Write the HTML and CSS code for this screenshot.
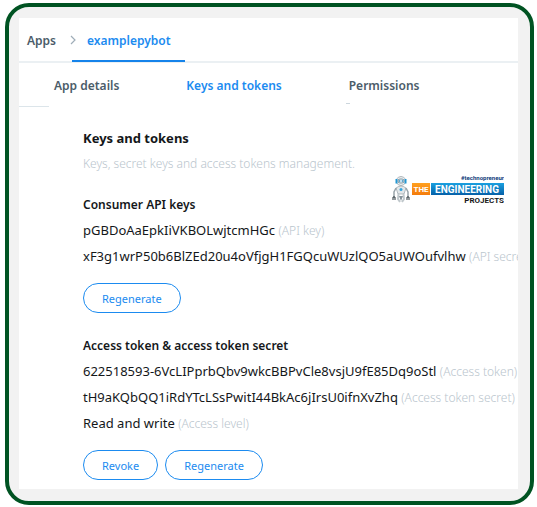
FILE: index.html
```html
<!DOCTYPE html>
<html lang="en">
    <head>
        <meta charset="utf-8">
        <title>examplepybot - Keys and tokens</title>
        <link rel="stylesheet" href="styles.css">
    </head>
    <body>
        <div class="frame">
            <div class="page">
                <nav class="crumbs">
                    <a class="crumb" href="#">Apps</a>
                    <a class="crumb current" href="#">
                        <svg class="arrow" viewBox="0 0 6 10" width="6" height="10"><path d="M1 1l4 4-4 4" fill="none" stroke="#9fadb8" stroke-width="1.2"/></svg>
                        <span>examplepybot</span>
                    </a>
                </nav>

                <nav class="tabs">
                    <a class="tab" href="#">App details</a>
                    <a class="tab active" href="#">Keys and tokens</a>
                    <a class="tab marked" href="#">Permissions</a>
                </nav>

                <main class="content">
                    <h1>Keys and tokens</h1>
                    <p class="intro">Keys, secret keys and access tokens management.</p>

                    <section>
                        <h2>Consumer API keys</h2>
                        <p class="key">pGBDoAaEpkIiVKBOLwjtcmHGc <span>(API key)</span></p>
                        <p class="key">xF3g1wrP50b6BlZEd20u4oVfjgH1FGQcuWUzlQO5aUWOufvlhw <span>(API secret key)</span></p>
                        <div class="buttons">
                            <button type="button">Regenerate</button>
                        </div>
                    </section>

                    <section>
                        <h2>Access token &amp; access token secret</h2>
                        <p class="key">622518593-6VcLIPprbQbv9wkcBBPvCle8vsjU9fE85Dq9oStl <span>(Access token)</span></p>
                        <p class="key">tH9aKQbQQ1iRdYTcLSsPwitI44BkAc6jIrsU0ifnXvZhq <span>(Access token secret)</span></p>
                        <p class="key">Read and write <span>(Access level)</span></p>
                        <div class="buttons">
                            <button type="button">Revoke</button>
                            <button type="button">Regenerate</button>
                        </div>
                    </section>
                </main>

                <svg class="logo" viewBox="0 0 113 32" width="113" height="32" role="img" aria-label="The Engineering Projects">
                    <defs>
                        <linearGradient id="orange" x1="0" y1="0" x2="0" y2="1">
                            <stop offset="0" stop-color="#ffa01f"/>
                            <stop offset="1" stop-color="#f47b0b"/>
                        </linearGradient>
                        <linearGradient id="blue" x1="0" y1="0" x2="0" y2="1">
                            <stop offset="0" stop-color="#1aa0e0"/>
                            <stop offset="1" stop-color="#0560a8"/>
                        </linearGradient>
                    </defs>
                    <!-- robot -->
                    <path d="M5.500 5Q10 0 14.500 5V9Q10 14 5.500 9z" fill="#edf1f3" stroke="#8c979d" stroke-width=".7"/>
                    <path d="M5.500 5v4.500M14.500 5v4.500" stroke="#2197d4" stroke-width="2"/>
                    <rect x="7" y="5" width="6" height="4" rx="2" fill="#dff3fc" stroke="#4a5c66" stroke-width=".6"/>
                    <circle cx="8.600" cy="7" r=".8" fill="#1d7db3"/>
                    <circle cx="11.400" cy="7" r=".8" fill="#1d7db3"/>
                    <path d="M5 14Q10 10 15 14L13 20H7z" fill="#e3e7e9" stroke="#87949c" stroke-width=".6"/>
                    <circle cx="10" cy="15.500" r="1.500" fill="#35a5dd"/>
                    <path d="M5 14L3 18v5M15 14l2 4v5" fill="none" stroke="#9aa5ab" stroke-width="1.500"/>
                    <path d="M2 26v-3h2v3M16 26v-3h2v3" fill="none" stroke="#28343a" stroke-width="1"/>
                    <path d="M7.500 20L7 25l2 3M12.500 20l.5 5-2 3" fill="none" stroke="#c0c8cc" stroke-width="2"/>
                    <path d="M8 22h4l-2 5z" fill="#87949c"/>
                    <rect x="21" y="9" width="18" height="12" fill="url(#orange)"/>
                    <rect x="40" y="9" width="73" height="12" fill="url(#blue)"/>
                    <text class="tag" x="113" y="6" text-anchor="end">#technopreneur</text>
                    <text class="the" x="30" y="18" text-anchor="middle">THE</text>
                    <text class="eng" x="76" y="19" text-anchor="middle">ENGINEERING</text>
                    <text class="proj" x="113" y="29" text-anchor="end">PROJECTS</text>
                </svg>
            </div>
        </div>
    </body>
</html>
```
FILE: styles.css
```css
body {
    margin: 3px 3px 2px 5px;
    background: #fff;
    font-family: "Noto Sans", sans-serif;
    font-size: 12px;
    color: #14171a;
}

.frame {
    padding: 11px 12px 12px 10px;
    border: 4px solid #005322;
    border-radius: 24px;
    background: #f2f2f2;
}

.page {
    position: relative;
    overflow: hidden;
    background: #fff;
}

.crumbs {
    display: flex;
    height: 43px;
    padding-left: 8px;
    border-bottom: 2px solid #ebf0f3;
}

.crumb {
    display: flex;
    box-sizing: border-box;
    align-items: center;
    height: 44px;
    border-bottom: 2px solid transparent;
    padding-top: 2px;
    color: #4b5c69;
    font-weight: 600;
    text-decoration: none;
}

.current {
    margin-left: 16px;
    padding-right: 14px;
    border-color: #1583ea;
    color: #1b8bf0;
}

.arrow {
    margin: 0 11px 0 -2px;
}

.tabs {
    display: flex;
    height: 44px;
    gap: 67px;
    align-items: center;
}

.tabs:before {
    content: "";
    align-self: flex-end;
    width: 30px;
    margin-right: -62px;
    border-bottom: 1px solid #dce5ea;
}

.tab {
    color: #4b5c69;
    font-weight: 600;
    text-decoration: none;
}

.active {
    color: #1b8bf0;
}

.marked {
    position: relative;
}

.marked:after {
    content: "";
    position: absolute;
    left: -3px;
    bottom: -10px;
    width: 4px;
    height: 1px;
    background: #ccd6dd;
}

.content {
    padding: 19px 0 9px 64px;
    white-space: nowrap;
}

h1 {
    margin: 0;
    font-size: 13px;
    line-height: 25px;
}

.intro {
    margin: 0 0 15px;
    line-height: 26px;
    color: #b9c5cd;
    font-weight: 300;
}

h2 {
    margin: 0;
    font-size: 12px;
    font-weight: 600;
    line-height: 25px;
}

.key {
    margin: 0;
    font-size: 13px;
    line-height: 26px;
}

.key span {
    color: #b9c5cd;
    font-size: 12px;
    font-weight: 300;
    line-height: 1;
}

.buttons {
    display: flex;
    gap: 7px;
    padding: 14px 0 20px;
}

section:last-child .buttons {
    padding-bottom: 0;
}

button {
    height: 30px;
    padding: 0 18px;
    border: 1px solid #1b8bf0;
    border-radius: 15px;
    background: #fff;
    color: #1b8bf0;
    font-family: inherit;
    font-size: 11px;
}

.logo {
    position: absolute;
    top: 156px;
    right: 14px;
}

.logo text {
    font-family: Roboto, "Liberation Sans", sans-serif;
    font-weight: bold;
    fill: #fff;
}

.logo .tag {
    font-size: 6px;
    fill: #123e7c;
}

.logo .the {
    font-size: 8px;
}

.logo .eng {
    font-size: 10px;
}

.logo .proj {
    font-size: 8px;
    fill: #191919;
}
```
